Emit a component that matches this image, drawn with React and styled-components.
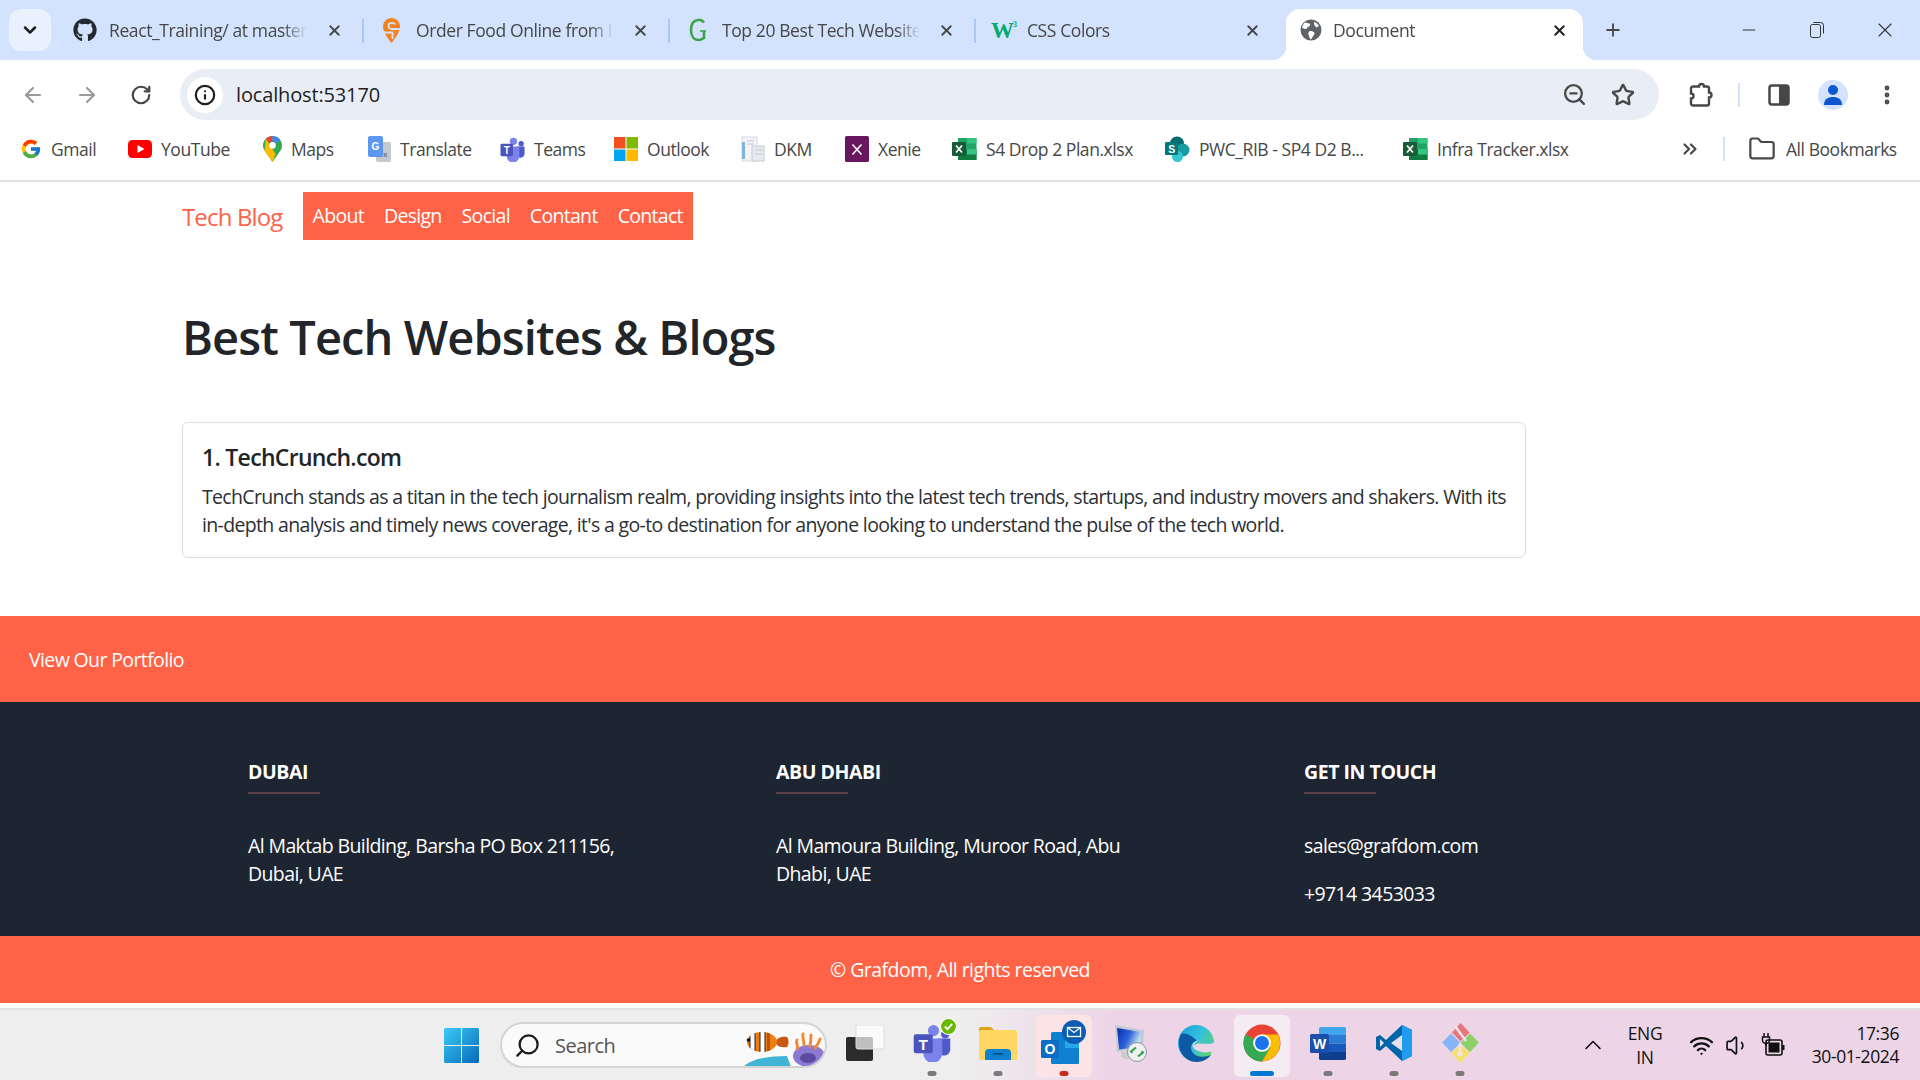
import styled, { createGlobalStyle } from 'styled-components';
import {
	ArrowLeft, ArrowRight, RotateCw, Star, ZoomOut, X, Plus, Minus, ChevronDown, ChevronUp,
	ChevronsRight, Folder, EllipsisVertical, Wifi, Volume1, Search, Info,
} from 'lucide-react';
import { FaGithub } from 'react-icons/fa';
import { FcGoogle } from 'react-icons/fc';

const UI = `"Open Sans", "Noto Sans", "Liberation Sans", sans-serif`;

const GlobalStyle = createGlobalStyle`
	* { box-sizing: border-box; }
	html, body { margin: 0; padding: 0; background: #fff; overflow: hidden; }
	body { font-family: ${UI}; }
`;

/* ---------- favicons and app logos ---------- */

const Swiggy = () => (
	<svg width="17" height="25" viewBox="0 0 17 25">
		<path d="M8.500 0C3.800 0 0 3.800 0 8.500 0 13.500 4 19.500 8.500 25 13 19.500 17 13.500 17 8.500 17 3.800 13.200 0 8.500 0z" fill="#f58220" />
		<path d="M12 6.500C11.500 4.500 6 4 5.500 7.500 5.300 10 7 11 9 11h8M0 14.500h9.500V21" fill="none" stroke="#d3e3fd" strokeWidth="1.800" />
	</svg>
);

const Globe = () => (
	<svg width="22" height="22" viewBox="0 0 22 22">
		<circle cx="11" cy="11" r="10.500" fill="#5f6368" />
		<path d="M5 3.500c2 .5 3.500 1 5 1 .5 1.500-.5 3-2 3.500-1 .5-1 2-2.500 2-1.500 0-2.500-1-3.500-1.500C2.500 6.500 3.500 4.800 5 3.500zM10 12c2 0 4 .5 4.500 2 .3 1.500-1.500 2.500-2 4-.3 1-1 2-1.800 2.500C9.500 19 9 17 8.500 15.500 8 14 8.500 12.500 10 12zM14 3c2 .5 4 2 5 4l-2.500 1.500C15 7.500 13.500 5 14 3z" fill="#fff" />
	</svg>
);

const W3 = () => (
	<svg width="36" height="26" viewBox="0 0 36 26">
		<text x="0" y="21" fontFamily="Liberation Serif, serif" fontWeight="700" fontSize="23" fill="#04aa6d">W</text>
		<text x="22" y="10" fontFamily="Liberation Serif, serif" fontWeight="700" fontSize="8" fill="#04aa6d">3</text>
	</svg>
);

const GreenG = () => (
	<svg width="26" height="26" viewBox="0 0 26 26">
		<path d="M19 5.500C17.500 3.500 15 2.500 13 3 8 3.500 6 8 6 13c0 6 3 10 7.500 10 2 0 4-1 5.500-2v-7" fill="none" stroke="#3da34a" strokeWidth="2.600" />
		<path d="M15 14h6" stroke="#3da34a" strokeWidth="1.500" />
	</svg>
);

const YouTube = () => (
	<svg width="24" height="18" viewBox="0 0 24 18">
		<rect width="24" height="18" rx="4.500" fill="#f00" />
		<path d="M9.500 5v8l7-4z" fill="#fff" />
	</svg>
);

const Maps = () => (
	<svg width="19" height="26" viewBox="0 0 19 26">
		<path d="M9.500 0C4.300 0 0 4.200 0 9.400c0 2 .6 3.500 1.500 5L9.500 26l8-11.600c1-1.500 1.500-3 1.500-5C19 4.200 14.700 0 9.500 0z" fill="#34a853" />
		<path d="M3 2.800 1.500 14.400 9.500 26l3-8L3 2.800z" fill="#fbbc04" />
		<path d="M3 2.800C4.700 1 7 0 9.500 0v5L6.500 7z" fill="#ea4335" />
		<path d="M9.500 0c3 0 5.700 1.400 7.400 3.500L12 8.500 9.500 5z" fill="#4285f4" />
		<circle cx="9.500" cy="9.400" r="3.300" fill="#fff" />
	</svg>
);

const Translate = () => (
	<svg width="23" height="26" viewBox="0 0 23 26">
		<rect x="8" y="6" width="15" height="20" rx="2" fill="#c4c9d0" />
		<rect x="0" y="0" width="15" height="21" rx="2" fill="#5c97ef" />
		<text x="3.500" y="14" fontFamily="Liberation Sans, sans-serif" fontWeight="700" fontSize="10" fill="#fff">G</text>
		<text x="15" y="21" fontFamily="Liberation Sans, sans-serif" fontWeight="700" fontSize="8" fill="#6b7280">x</text>
	</svg>
);

const TeamsLogo = ({ size = 26 }) => (
	<svg width={size} height={size} viewBox="0 0 26 26">
		<circle cx="14" cy="4.500" r="3.800" fill="#7b83eb" />
		<circle cx="22" cy="7" r="2.800" fill="#5059c9" />
		<path d="M17 10h8.500v8a4.500 4.500 0 0 1-8.500 1z" fill="#5059c9" />
		<path d="M7 10h13v10a6.500 6.500 0 0 1-13 0z" fill="#7b83eb" />
		<rect x="0.500" y="7" width="13" height="13" rx="1.500" fill="#4b53bc" />
		<text x="7" y="17.500" textAnchor="middle" fontFamily="Liberation Sans, sans-serif" fontWeight="700" fontSize="10.500" fill="#fff">T</text>
	</svg>
);

const Windows4 = () => (
	<svg width="24" height="24" viewBox="0 0 24 24">
		<rect width="11.500" height="11.500" fill="#f25022" />
		<rect x="12.500" width="11.500" height="11.500" fill="#7fba00" />
		<rect y="12.500" width="11.500" height="11.500" fill="#00a4ef" />
		<rect x="12.500" y="12.500" width="11.500" height="11.500" fill="#ffb900" />
	</svg>
);

const Dkm = () => (
	<svg width="24" height="26" viewBox="0 0 24 26">
		<rect x="1" y="1" width="15" height="24" fill="#f1f3f6" stroke="#d5d9df" />
		<rect x="1" y="6" width="3" height="17" fill="#7fb2dd" />
		<rect x="11" y="10" width="12" height="15" fill="#e6e9ee" stroke="#c8ccd3" />
		<path d="M6 5h7M6 8h7M14 14h7M14 18h7" stroke="#c3c7cd" />
	</svg>
);

const Xenie = () => (
	<svg width="24" height="26" viewBox="0 0 24 26">
		<rect width="24" height="26" rx="1.500" fill="#68175f" />
		<path d="M7.500 8.500l9 10M16.500 8.500l-9 10" stroke="#fff" strokeWidth="1.600" />
	</svg>
);

const Excel = () => (
	<svg width="25" height="24" viewBox="0 0 25 24">
		<path d="M6 1h17.500a1 1 0 0 1 1 1v20a1 1 0 0 1-1 1H6z" fill="#21a366" />
		<path d="M6 12h18.500v11H6z" fill="#107c41" />
		<path d="M15 1h9.500v5.500H15zM15 12h9.500v5.500H15z" fill="#33c481" />
		<rect y="5" width="14" height="14" rx="1" fill="#185c37" />
		<path d="M4 8.500l6 7M10 8.500l-6 7" stroke="#fff" strokeWidth="1.700" />
	</svg>
);

const SharePoint = () => (
	<svg width="25" height="26" viewBox="0 0 25 26">
		<circle cx="12" cy="7.500" r="7" fill="#036c70" />
		<circle cx="18" cy="14" r="6.500" fill="#1a9ba1" />
		<circle cx="12.500" cy="20.500" r="5.500" fill="#37c6d0" />
		<rect y="6" width="13" height="13" rx="1.200" fill="#03787c" />
		<text x="6.500" y="16.500" textAnchor="middle" fontFamily="Liberation Sans, sans-serif" fontWeight="700" fontSize="10.500" fill="#fff">S</text>
	</svg>
);

const PanelIcon = () => (
	<svg width="24" height="24" viewBox="0 0 24 24">
		<rect x="2.500" y="2.500" width="19" height="19" rx="2.500" fill="#fff" stroke="#474747" strokeWidth="2.500" />
		<rect x="12" y="2.500" width="9.500" height="19" fill="#474747" />
	</svg>
);

const Extension = () => (
	<svg width="26" height="28" viewBox="0 0 26 28">
		<path d="M9 5.500h3a2.500 2.500 0 0 1 5 0h3a2 2 0 0 1 2 2v4a2.500 2.500 0 0 1 0 5v6a2 2 0 0 1-2 2H6a2 2 0 0 1-2-2v-5a2.500 2.500 0 0 0 0-5v-5a2 2 0 0 1 2-2z" fill="none" stroke="#474747" strokeWidth="2.400" />
	</svg>
);

const RestoreIcon = () => (
	<svg width="16" height="18" viewBox="0 0 16 18">
		<rect x="1.500" y="3.500" width="10" height="13" rx="2" fill="none" stroke="#333" />
		<path d="M4.500 1.500h7a3 3 0 0 1 3 3v8" fill="none" stroke="#333" />
	</svg>
);

const Avatar = () => (
	<svg width="20" height="24" viewBox="0 0 20 24">
		<circle cx="10" cy="7" r="5" fill="#0b57d0" />
		<path d="M1 22c0-6 4-8 9-8s9 2 9 8z" fill="#0b57d0" />
	</svg>
);

const WinLogo = () => (
	<svg width="35" height="35" viewBox="0 0 35 35">
		<defs>
			<linearGradient id="win" x1="0" y1="0" x2="1" y2="1">
				<stop offset="0" stopColor="#3ccbf4" />
				<stop offset="1" stopColor="#0669bc" />
			</linearGradient>
		</defs>
		<path d="M0 1.500A1.500 1.500 0 0 1 1.500 0H17v17H0zM18 0h15.500A1.500 1.500 0 0 1 35 1.500V17H18zM0 18h17v17H1.500A1.500 1.500 0 0 1 0 33.500zM18 18h17v15.500a1.500 1.500 0 0 1-1.500 1.500H18z" fill="url(#win)" />
	</svg>
);

const Fish = () => (
	<svg width="84" height="44" viewBox="0 0 84 44">
		<defs>
			<clipPath id="fishBody"><ellipse cx="21" cy="18" rx="15" ry="10" /></clipPath>
		</defs>
		<path d="M2 43c8-8 24-11 44-11l4 11z" fill="#42b4d6" />
		<path d="M34 18c2-5 8-6 12-5 2 2.500 2 8 0 10-4 1-10 0-12-5z" fill="#c55a11" />
		<ellipse cx="21" cy="18" rx="15" ry="10" fill="#ef7d12" />
		<g clipPath="url(#fishBody)">
			<rect x="9" y="6" width="5" height="24" fill="#fff" stroke="#222" />
			<rect x="19" y="6" width="5" height="24" fill="#fff" stroke="#222" />
			<path d="M26 6h3v24h-3z" fill="#b95508" />
		</g>
		<circle cx="7.500" cy="16" r="1.800" fill="#111" />
		<ellipse cx="68" cy="32" rx="16" ry="11" fill="#8c7ad0" />
		<ellipse cx="67" cy="34" rx="8" ry="5" fill="#5b4a9f" />
		<path d="M56 25c2-4-2-6 0-9M63 21c0-5-2-8-1-11M69 22c1-5 1-8 1-11M74 24c3-3 4-6 5-9" fill="none" stroke="#f08a3c" strokeWidth="3" strokeLinecap="round" />
	</svg>
);

const TaskView = () => (
	<svg width="40" height="36" viewBox="0 0 40 36">
		<rect x="0" y="12" width="27" height="24" rx="2" fill="#2b2b2b" />
		<rect x="10" y="0" width="28" height="24" rx="2" fill="#fff" fillOpacity=".7" stroke="#ddd" />
	</svg>
);

const TeamsBar = () => (
	<TeamsWrap>
		<TeamsLogo size={38} />
		<Presence>
			<svg width="17" height="17" viewBox="0 0 16 16">
				<circle cx="8" cy="8" r="7.500" fill="#6bb700" stroke="#fff" />
				<path d="M4.500 8l2.500 2.500 4.500-5" fill="none" stroke="#fff" strokeWidth="1.700" />
			</svg>
		</Presence>
	</TeamsWrap>
);

const Explorer = () => (
	<svg width="38" height="33" viewBox="0 0 38 33">
		<path d="M0 2a2 2 0 0 1 2-2h10l4 4h-16z" fill="#dfa21b" />
		<rect y="3" width="38" height="30" rx="2" fill="#fdd75f" />
		<path d="M6 33v-7a4 4 0 0 1 4-4h18a4 4 0 0 1 4 4v7z" fill="#0f7fcf" />
		<rect x="14" y="26" width="10" height="1.800" fill="#0a4f85" />
	</svg>
);

const OutlookIcon = () => (
	<svg width="46" height="46" viewBox="0 0 46 46">
		<rect x="10" y="12" width="28" height="32" rx="1.500" fill="#0f7fcf" />
		<rect x="24" y="12" width="14" height="16" fill="#28a8ea" />
		<rect y="20" width="18" height="18" rx="1.500" fill="#0a6ec4" />
		<text x="9" y="34" textAnchor="middle" fontFamily="Liberation Sans, sans-serif" fontWeight="700" fontSize="14" fill="#fff">O</text>
		<circle cx="33" cy="12" r="12" fill="#0b5db3" />
		<rect x="26.500" y="7.500" width="13" height="9" fill="none" stroke="#fff" strokeWidth="1.300" />
		<path d="M26.500 7.500l6.500 5 6.500-5" fill="none" stroke="#fff" strokeWidth="1.300" />
	</svg>
);

const Remote = () => (
	<svg width="36" height="38" viewBox="0 0 36 38">
		<defs>
			<linearGradient id="rdpScreen" x1="0" y1="0" x2="1" y2="0.400">
				<stop offset="0" stopColor="#0a2bb0" />
				<stop offset=".55" stopColor="#2a63d8" />
				<stop offset="1" stopColor="#c7e0f5" />
			</linearGradient>
		</defs>
		<path d="M3 1l29 5-1 19-26 3z" fill="#c3c9d2" />
		<path d="M5 4l24 4-.8 15-21 2.500z" fill="url(#rdpScreen)" />
		<path d="M9 28l12-1 4 7-10 1c-4 0-7-2-6-7z" fill="#c9ccd1" />
		<circle cx="25" cy="28" r="9.500" fill="#eef0f2" stroke="#8f959c" />
		<path d="M24 23.500l-5 4 1.500 1.200M26 32.500l5-4-1.500-1.200" fill="none" stroke="#2d9f45" strokeWidth="2" />
	</svg>
);

const Edge = () => (
	<svg width="36" height="37" viewBox="0 0 36 37">
		<defs>
			<linearGradient id="edge1" x1="0" y1="0.100" x2="1" y2="0.700">
				<stop offset="0" stopColor="#1b9de2" />
				<stop offset=".55" stopColor="#35c1d8" />
				<stop offset="1" stopColor="#62d661" />
			</linearGradient>
		</defs>
		<path d="M18 0C8 0 0 8 0 18.500c0 10 8 18 18 18 7 0 12-2.500 15-7V21c2-1 3-2 3-3C36 8 28 0 18 0z" fill="url(#edge1)" />
		<path d="M3 9C-2 19 2 33 14 36.500c8 1.500 14-.5 19-6.500-5 2-12 3-17-1-3-2.500-4-7-2-10 1-2 3-3 5-3.500C14 11 8 7 3 9z" fill="#0c59a4" />
		<path d="M14.500 20c1-3.500 4.500-5 8-4.500 4.500.5 7 1 13.500 1.500v8c-4 2.500-9 3-14 1.500-4-1-7.500-3-7.500-6.500z" fill="#edd5e7" />
		<path d="M22 15c-3 1-6 3-6.500 6 1-1.500 3-2.500 6-2.500 5 0 9 1 14-.5 0-1.500 0-2-.2-3-4 1-8 1-13.300 0z" fill="#3fc5bd" />
	</svg>
);

const Chrome = () => (
	<svg width="38" height="38" viewBox="0 0 38 38">
		<circle cx="19" cy="19" r="18.500" fill="#ea4335" />
		<path d="M19 19 2.500 10.500A18.500 18.500 0 0 0 19 37.500l8-13z" fill="#34a853" />
		<path d="M19 10.500h16A18.500 18.500 0 0 1 19 37.500L27 24z" fill="#fbbc04" />
		<circle cx="19" cy="19" r="8.800" fill="#fff" />
		<circle cx="19" cy="19" r="7" fill="#1a73e8" />
	</svg>
);

const Word = () => (
	<svg width="36" height="33" viewBox="0 0 36 33">
		<path d="M9 1.500A1.500 1.500 0 0 1 10.500 0h24A1.500 1.500 0 0 1 36 1.500V8H9z" fill="#41a5ee" />
		<rect x="9" y="8" width="27" height="8.500" fill="#2b7cd3" />
		<rect x="9" y="16.500" width="27" height="8.500" fill="#185abd" />
		<path d="M9 25h27v6.500a1.500 1.500 0 0 1-1.500 1.500h-24A1.500 1.500 0 0 1 9 31.500z" fill="#103f91" />
		<rect y="7" width="19" height="19" rx="1.500" fill="#1b4fab" />
		<text x="9.500" y="22" textAnchor="middle" fontFamily="Liberation Sans, sans-serif" fontWeight="700" fontSize="14" fill="#fff">W</text>
	</svg>
);

const VsCode = () => (
	<svg width="36" height="36" viewBox="0 0 36 36">
		<path d="M26 0 36 5v26l-10 5L10 21l-6 5-4-2V12l4-2 6 5z" fill="#0065a9" />
		<path d="M26 0 36 5v26l-10 5z" fill="#1f9cf0" />
		<path d="M26 10 15 18l11 8z" fill="#e8e0ec" />
		<path d="M4 14v8l4-4z" fill="#e8e0ec" />
	</svg>
);

const GitApp = () => (
	<svg width="37" height="40" viewBox="0 0 37 40">
		<path d="M18.500 20 9 10.500 0 19.500 9 29z" fill="#85b5f5" />
		<path d="M18.500 20 28 10.500l9 9L28 29z" fill="#8ccf6b" />
		<path d="M18.500 22 9 30l9.500 10 9.500-10z" fill="#f5e26e" />
		<path d="M10 9.500 18.500 0l9 9.500-9 9z" fill="#e8747c" />
		<path d="M13 3l11 15M18 20v11" stroke="#f2e3ec" strokeWidth="2.500" />
		<circle cx="18" cy="31" r="2.500" fill="#f2e3ec" />
	</svg>
);

const BatteryPlug = () => (
	<svg width="24" height="28" viewBox="0 0 24 28">
		<rect x="5" y="9" width="16" height="15" rx="2" fill="none" stroke="#111" strokeWidth="1.600" />
		<rect x="7.500" y="11.500" width="11" height="10" fill="#111" />
		<rect x="21" y="14" width="2.500" height="5" fill="#111" />
		<path d="M3 2v4M7 2v4M1.500 6h7v3a3.500 3.500 0 0 1-7 0zM5 12v3" fill="none" stroke="#111" strokeWidth="1.500" />
	</svg>
);

/* ---------- data ---------- */

const tabs = [
	{ icon: <FaGithub size={24} color="#24292f" />, title: 'React_Training/ at master', w: 26 },
	{ icon: <Swiggy />, title: 'Order Food Online from India', w: 27 },
	{ icon: <GreenG />, title: 'Top 20 Best Tech Websites', w: 27 },
	{ icon: <W3 />, title: 'CSS Colors', w: 37, short: true },
];

const bookmarks = [
	{ icon: <FcGoogle size={22} />, label: 'Gmail', w: 108 },
	{ icon: <YouTube />, label: 'YouTube', w: 135 },
	{ icon: <Maps />, label: 'Maps', w: 105 },
	{ icon: <Translate />, label: 'Translate', w: 132 },
	{ icon: <TeamsLogo size={25} />, label: 'Teams', w: 114 },
	{ icon: <Windows4 />, label: 'Outlook', w: 127 },
	{ icon: <Dkm />, label: 'DKM', w: 104 },
	{ icon: <Xenie />, label: 'Xenie', w: 107 },
	{ icon: <Excel />, label: 'S4 Drop 2 Plan.xlsx', w: 213 },
	{ icon: <SharePoint />, label: 'PWC_RIB - SP4 D2 B...', w: 238 },
	{ icon: <Excel />, label: 'Infra Tracker.xlsx', w: 190 },
];

const dock = [
	{ icon: <TaskView /> },
	{ icon: <TeamsBar />, dot: '#7a7a7a' },
	{ icon: <Explorer />, dot: '#7a7a7a' },
	{ icon: <OutlookIcon />, dot: '#c42b1c', tint: '#fbe3e6' },
	{ icon: <Remote /> },
	{ icon: <Edge /> },
	{ icon: <Chrome />, dot: '#0078d4', long: true, tint: '#f5ebf3' },
	{ icon: <Word />, dot: '#7a7a7a' },
	{ icon: <VsCode />, dot: '#7a7a7a' },
	{ icon: <GitApp />, dot: '#7a7a7a' },
];

const offices = [
	{
		title: 'DUBAI',
		lines: ['Al Maktab Building, Barsha PO Box 211156, Dubai, UAE'],
	},
	{
		title: 'ABU DHABI',
		lines: ['Al Mamoura Building, Muroor Road, Abu Dhabi, UAE'],
	},
	{
		title: 'GET IN TOUCH',
		lines: ['sales@grafdom.com', '+9714 3453033'],
	},
];

const App = () => (
	<Screen>
		<GlobalStyle />
		<TabStrip>
			<TabMenu><ChevronDown size={20} strokeWidth={3} color="#1f1f1f" /></TabMenu>
			{tabs.map((tab) => (
				<Tab key={tab.title}>
					<Favicon $w={tab.w}>{tab.icon}</Favicon>
					<TabTitle $short={tab.short}>{tab.title}</TabTitle>
					<TabClose><X size={17} strokeWidth={2.600} /></TabClose>
				</Tab>
			))}
			<ActiveTab>
				<Favicon $w={22}><Globe /></Favicon>
				<TabTitle>Document</TabTitle>
				<TabClose $dark><X size={17} strokeWidth={2.800} /></TabClose>
			</ActiveTab>
			<NewTab><Plus size={22} strokeWidth={2.200} color="#474747" /></NewTab>
			<WindowControls>
				<WindowButton><Minus size={20} strokeWidth={1.200} /></WindowButton>
				<WindowButton><RestoreIcon /></WindowButton>
				<WindowButton><X size={24} strokeWidth={1.100} /></WindowButton>
			</WindowControls>
		</TabStrip>

		<Toolbar>
			<NavButton><ArrowLeft size={24} color="#9a9a9a" strokeWidth={2.200} /></NavButton>
			<NavButton><ArrowRight size={24} color="#9a9a9a" strokeWidth={2.200} /></NavButton>
			<NavButton><RotateCw size={22} color="#474747" strokeWidth={2.400} /></NavButton>
			<AddressBar>
				<SiteInfo><Info size={22} color="#1f1f1f" strokeWidth={2.400} /></SiteInfo>
				<Url>localhost:53170</Url>
				<AddressIcon $ml="auto"><ZoomOut size={25} color="#474747" strokeWidth={2.200} /></AddressIcon>
				<AddressIcon $ml="24px"><Star size={24} color="#474747" strokeWidth={2.400} /></AddressIcon>
			</AddressBar>
			<ToolButton $ml={21}><Extension /></ToolButton>
			<ToolDivider />
			<ToolButton $ml={19}><PanelIcon /></ToolButton>
			<ProfileButton><Avatar /></ProfileButton>
			<ToolButton $ml={19}><EllipsisVertical size={24} color="#474747" strokeWidth={2.800} /></ToolButton>
		</Toolbar>

		<BookmarkBar>
			{bookmarks.map((item) => (
				<Bookmark key={item.label} $w={item.w}>
					<BookmarkIcon>{item.icon}</BookmarkIcon>
					<span>{item.label}</span>
				</Bookmark>
			))}
			<MoreBookmarks><ChevronsRight size={22} strokeWidth={2.400} color="#474747" /></MoreBookmarks>
			<BookmarkDivider />
			<AllBookmarks>
				<Folder size={28} strokeWidth={1.900} color="#474747" />
				<span>All Bookmarks</span>
			</AllBookmarks>
		</BookmarkBar>

		<Main>
			<Header>
				<Brand href="#">Tech Blog</Brand>
				<Menu>
					{['About', 'Design', 'Social', 'Contant', 'Contact'].map((item) => (
						<MenuLink href="#" key={item}>{item}</MenuLink>
					))}
				</Menu>
			</Header>
			<Heading>Best Tech Websites &amp; Blogs</Heading>
			<Card>
				<CardTitle>1. TechCrunch.com</CardTitle>
				<CardText>
					TechCrunch stands as a titan in the tech journalism realm, providing insights into the latest tech trends, startups, and industry movers and shakers. With its in-depth analysis and timely news coverage, it's a go-to destination for anyone looking to understand the pulse of the tech world.
				</CardText>
			</Card>
		</Main>

		<PortfolioBand>View Our Portfolio</PortfolioBand>

		<Offices>
			{offices.map((office) => (
				<Office key={office.title}>
					<OfficeTitle>{office.title}</OfficeTitle>
					{office.lines.map((line) => <OfficeLine key={line}>{line}</OfficeLine>)}
				</Office>
			))}
		</Offices>

		<Copyright>© Grafdom, All rights reserved</Copyright>

		<Taskbar>
			<StartTile><WinLogo /></StartTile>
			<SearchPill>
				<SearchIcon><Search size={27} strokeWidth={2} color="#1a1a1a" /></SearchIcon>
				<SearchLabel>Search</SearchLabel>
				<SearchArt><Fish /></SearchArt>
			</SearchPill>
			{dock.map((app, i) => (
				<DockTile key={i} $tint={app.tint}>
					{app.icon}
					{app.dot && <DockDot $color={app.dot} $long={app.long} />}
				</DockTile>
			))}
			<Tray>
				<ChevronUp size={28} strokeWidth={1.400} color="#111" />
				<Lang><span>ENG</span><span>IN</span></Lang>
				<TrayIcons>
					<Wifi size={25} strokeWidth={2.200} color="#111" />
					<Volume1 size={25} strokeWidth={1.600} color="#111" />
					<BatteryPlug />
				</TrayIcons>
				<Clock><span>17:36</span><span>30-01-2024</span></Clock>
			</Tray>
		</Taskbar>
	</Screen>
);

const Screen = styled.div`
	width: 1920px;
	height: 1080px;
	overflow: hidden;
	display: flex;
	flex-direction: column;
	background: #fff;
	font-family: ${UI};
`;

const TabStrip = styled.div`
	height: 60px;
	display: flex;
	align-items: flex-start;
	padding-left: 9px;
	background: #d3e3fd;
`;

const TabMenu = styled.div`
	width: 42px;
	height: 42px;
	margin: 9px 7px 0 0;
	display: flex;
	align-items: center;
	justify-content: center;
	border-radius: 12px;
	background: #e9f0fe;
`;

const Tab = styled.div`
	position: relative;
	width: 306px;
	height: 42px;
	margin-top: 9px;
	padding: 0 20px 0 14px;
	display: flex;
	align-items: center;
	&::after {
		content: '';
		position: absolute;
		right: 0;
		top: 10px;
		width: 2px;
		height: 24px;
		background: #a8c7fa;
	}
	&:nth-of-type(5)::after { display: none; }
`;

const ActiveTab = styled.div`
	position: relative;
	width: 297px;
	height: 51px;
	margin: 9px 0 0 4px;
	padding: 0 14px 9px;
	display: flex;
	align-items: center;
	background: #fff;
	border-radius: 14px 14px 0 0;
	&::before, &::after {
		content: '';
		position: absolute;
		bottom: 0;
		width: 14px;
		height: 14px;
	}
	&::before {
		left: -14px;
		background: radial-gradient(circle at 0 0, #d3e3fd 14px, #fff 14.500px);
	}
	&::after {
		right: -14px;
		background: radial-gradient(circle at 100% 0, #d3e3fd 14px, #fff 14.500px);
	}
`;

const Favicon = styled.div`
	width: ${(p) => p.$w}px;
	height: 26px;
	flex: none;
	display: flex;
	align-items: center;
	justify-content: center;
`;

const TabTitle = styled.div`
	width: 198px;
	margin-left: ${(p) => (p.$short ? 0 : 11)}px;
	font-size: 17.500px;
	letter-spacing: -0.400px;
	color: #474747;
	white-space: nowrap;
	overflow: hidden;
	-webkit-mask-image: linear-gradient(90deg, #000 88%, transparent);
	mask-image: linear-gradient(90deg, #000 88%, transparent);
`;

const TabClose = styled.div`
	width: 20px;
	margin-left: auto;
	display: flex;
	justify-content: center;
	color: ${(p) => (p.$dark ? '#1f1f1f' : '#474747')};
`;

const NewTab = styled.div`
	width: 20px;
	height: 60px;
	margin-left: 20px;
	display: flex;
	align-items: center;
	justify-content: center;
`;

const WindowControls = styled.div`
	margin-left: auto;
	margin-right: 1px;
	display: flex;
`;

const WindowButton = styled.div`
	width: 68px;
	height: 60px;
	display: flex;
	align-items: center;
	justify-content: center;
	color: #333;
`;

const Toolbar = styled.div`
	height: 66px;
	padding: 9px 0 6px 6px;
	display: flex;
	align-items: center;
	background: #fff;
	border-radius: 12px 12px 0 0;
`;

const NavButton = styled.div`
	width: 54px;
	display: flex;
	justify-content: center;
`;

const AddressBar = styled.div`
	width: 1479px;
	height: 51px;
	margin-left: 12px;
	padding: 0 24px 0 7px;
	display: flex;
	align-items: center;
	background: #e9eef6;
	border-radius: 26px;
`;

const SiteInfo = styled.div`
	width: 36px;
	height: 36px;
	display: flex;
	align-items: center;
	justify-content: center;
	border-radius: 50%;
	background: #fff;
`;

const Url = styled.div`
	margin-left: 13px;
	font-size: 20px;
	letter-spacing: -0.150px;
	color: #1f1f1f;
`;

const AddressIcon = styled.div`
	margin-left: ${(p) => p.$ml};
	display: flex;
`;

const ToolButton = styled.div`
	width: 40px;
	margin-left: ${(p) => p.$ml}px;
	display: flex;
	justify-content: center;
`;

const ToolDivider = styled.div`
	width: 2px;
	height: 24px;
	margin-left: 18px;
	background: #d3e3fd;
`;

const ProfileButton = styled.div`
	width: 30px;
	height: 30px;
	margin-left: 19px;
	display: flex;
	align-items: flex-end;
	justify-content: center;
	padding-bottom: 3px;
	border-radius: 50%;
	background: #d3e3fd;
`;

const BookmarkBar = styled.div`
	height: 56px;
	padding: 0 0 8px 20px;
	display: flex;
	align-items: center;
	background: #fff;
	border-bottom: 2px solid #e0e0e0;
	font-size: 17.500px;
	letter-spacing: -0.450px;
	color: #474747;
`;

const Bookmark = styled.div`
	width: ${(p) => p.$w}px;
	flex: none;
	display: flex;
	align-items: center;
	gap: 9px;
	white-space: nowrap;
`;

const BookmarkIcon = styled.div`
	display: flex;
`;

const MoreBookmarks = styled.div`
	margin-left: 86px;
	display: flex;
`;

const BookmarkDivider = styled.div`
	width: 2px;
	height: 24px;
	margin-left: 22px;
	background: #d3e3fd;
`;

const AllBookmarks = styled.div`
	margin-left: 23px;
	display: flex;
	align-items: center;
	gap: 10px;
	white-space: nowrap;
`;

const Main = styled.main`
	height: 434px;
	padding: 10px 0 0 182px;
`;

const Header = styled.header`
	display: flex;
	align-items: center;
	gap: 20px;
`;

const Brand = styled.a`
	font-size: 24px;
	letter-spacing: -0.850px;
	color: #ff6347;
	text-decoration: none;
	padding-top: 1px;
`;

const Menu = styled.nav`
	height: 48px;
	padding: 0 10px 2px;
	display: flex;
	align-items: center;
	gap: 20px;
	background: #ff6347;
`;

const MenuLink = styled.a`
	font-size: 19.500px;
	letter-spacing: -0.700px;
	color: #fff;
	text-decoration: none;
`;

const Heading = styled.h1`
	margin: 67px 0 55px;
	font-size: 47px;
	line-height: 60px;
	font-weight: 600;
	letter-spacing: -0.900px;
	color: #212529;
`;

const Card = styled.section`
	width: 1344px;
	height: 136px;
	padding: 19px 12px 0 19px;
	border: 1px solid #dcdcdc;
	border-radius: 6px;
`;

const CardTitle = styled.h5`
	margin: 0 0 11px;
	font-size: 23px;
	line-height: 30px;
	font-weight: 600;
	letter-spacing: -0.700px;
	color: #212529;
`;

const CardText = styled.p`
	margin: 0;
	font-size: 19.500px;
	line-height: 28px;
	letter-spacing: -0.660px;
	color: #2b3035;
`;

const PortfolioBand = styled.div`
	height: 86px;
	padding-left: 29px;
	display: flex;
	align-items: center;
	background: #ff6347;
	font-size: 19.500px;
	letter-spacing: -0.620px;
	color: #fff;
`;

const Offices = styled.div`
	height: 234px;
	padding: 56px 0 0 248px;
	display: grid;
	grid-template-columns: repeat(3, 528px);
	align-content: start;
	background: #1e2532;
	color: #fff;
`;

const Office = styled.div`
	width: 380px;
`;

const OfficeTitle = styled.h4`
	position: relative;
	margin: 0 0 38px;
	padding-bottom: 8px;
	font-size: 19.500px;
	line-height: 28px;
	font-weight: 700;
	letter-spacing: -0.450px;
	&::after {
		content: '';
		position: absolute;
		left: 0;
		bottom: 0;
		width: 72px;
		height: 2px;
		background: #5c404a;
	}
`;

const OfficeLine = styled.p`
	margin: 0 0 20px;
	font-size: 19.500px;
	line-height: 28px;
	letter-spacing: -0.620px;
`;

const Copyright = styled.div`
	height: 67px;
	display: flex;
	align-items: center;
	justify-content: center;
	background: #ff6347;
	font-size: 19.500px;
	letter-spacing: -0.550px;
	color: #fff;
`;

const Taskbar = styled.footer`
	height: 72px;
	margin-top: 5px;
	display: flex;
	align-items: center;
	padding-left: 428px;
	background: linear-gradient(90deg, #eeeeee 0, #eeeeee 50%, #edd5e7 58%, #edd5e7 100%);
	border-top: 2px solid #e2e0e2;
`;

const StartTile = styled.div`
	width: 66px;
	flex: none;
	display: flex;
	justify-content: center;
`;

const SearchPill = styled.div`
	position: relative;
	width: 327px;
	height: 46px;
	flex: none;
	margin: 0 6px;
	display: flex;
	align-items: center;
	background: #fafafa;
	border: 2px solid #d4d4d4;
	border-radius: 24px;
	overflow: hidden;
`;

const SearchIcon = styled.div`
	margin-left: 12px;
	display: flex;
	transform: scaleX(-1);
`;

const SearchLabel = styled.span`
	margin-left: 14px;
	font-size: 20px;
	letter-spacing: -0.500px;
	color: #555;
`;

const SearchArt = styled.div`
	position: absolute;
	right: 0;
	top: 0;
	display: flex;
`;

const DockTile = styled.div`
	position: relative;
	width: 66px;
	height: 60px;
	flex: none;
	display: flex;
	align-items: center;
	justify-content: center;
	padding-bottom: 4px;
	&::before {
		content: '';
		display: ${(p) => (p.$tint ? 'block' : 'none')};
		position: absolute;
		inset: 0 5px -2px;
		z-index: 0;
		border-radius: 6px;
		background: ${(p) => p.$tint};
	}
	> * { position: relative; }
`;

const DockDot = styled.div`
	position: absolute !important;
	left: 50%;
	bottom: -1px;
	width: ${(p) => (p.$long ? 24 : 9)}px;
	height: 5px;
	transform: translateX(-50%);
	border-radius: 3px;
	background: ${(p) => p.$color};
`;

const TeamsWrap = styled.div`
	position: relative;
	display: flex;
`;

const Presence = styled.div`
	position: absolute;
	right: -6px;
	top: -6px;
	display: flex;
`;

const Tray = styled.div`
	flex: none;
	margin-left: 86px;
	display: flex;
	align-items: center;
	color: #111;
`;

const Lang = styled.div`
	width: 60px;
	margin-left: 8px;
	display: flex;
	flex-direction: column;
	align-items: center;
	font-size: 17.500px;
	line-height: 24px;
	letter-spacing: -0.300px;
`;

const TrayIcons = styled.div`
	margin-left: 14px;
	display: flex;
	align-items: center;
	gap: 11px;
`;

const Clock = styled.div`
	width: 114px;
	display: flex;
	flex-direction: column;
	align-items: flex-end;
	font-size: 17.500px;
	line-height: 23px;
	letter-spacing: -0.400px;
`;

export default App;
